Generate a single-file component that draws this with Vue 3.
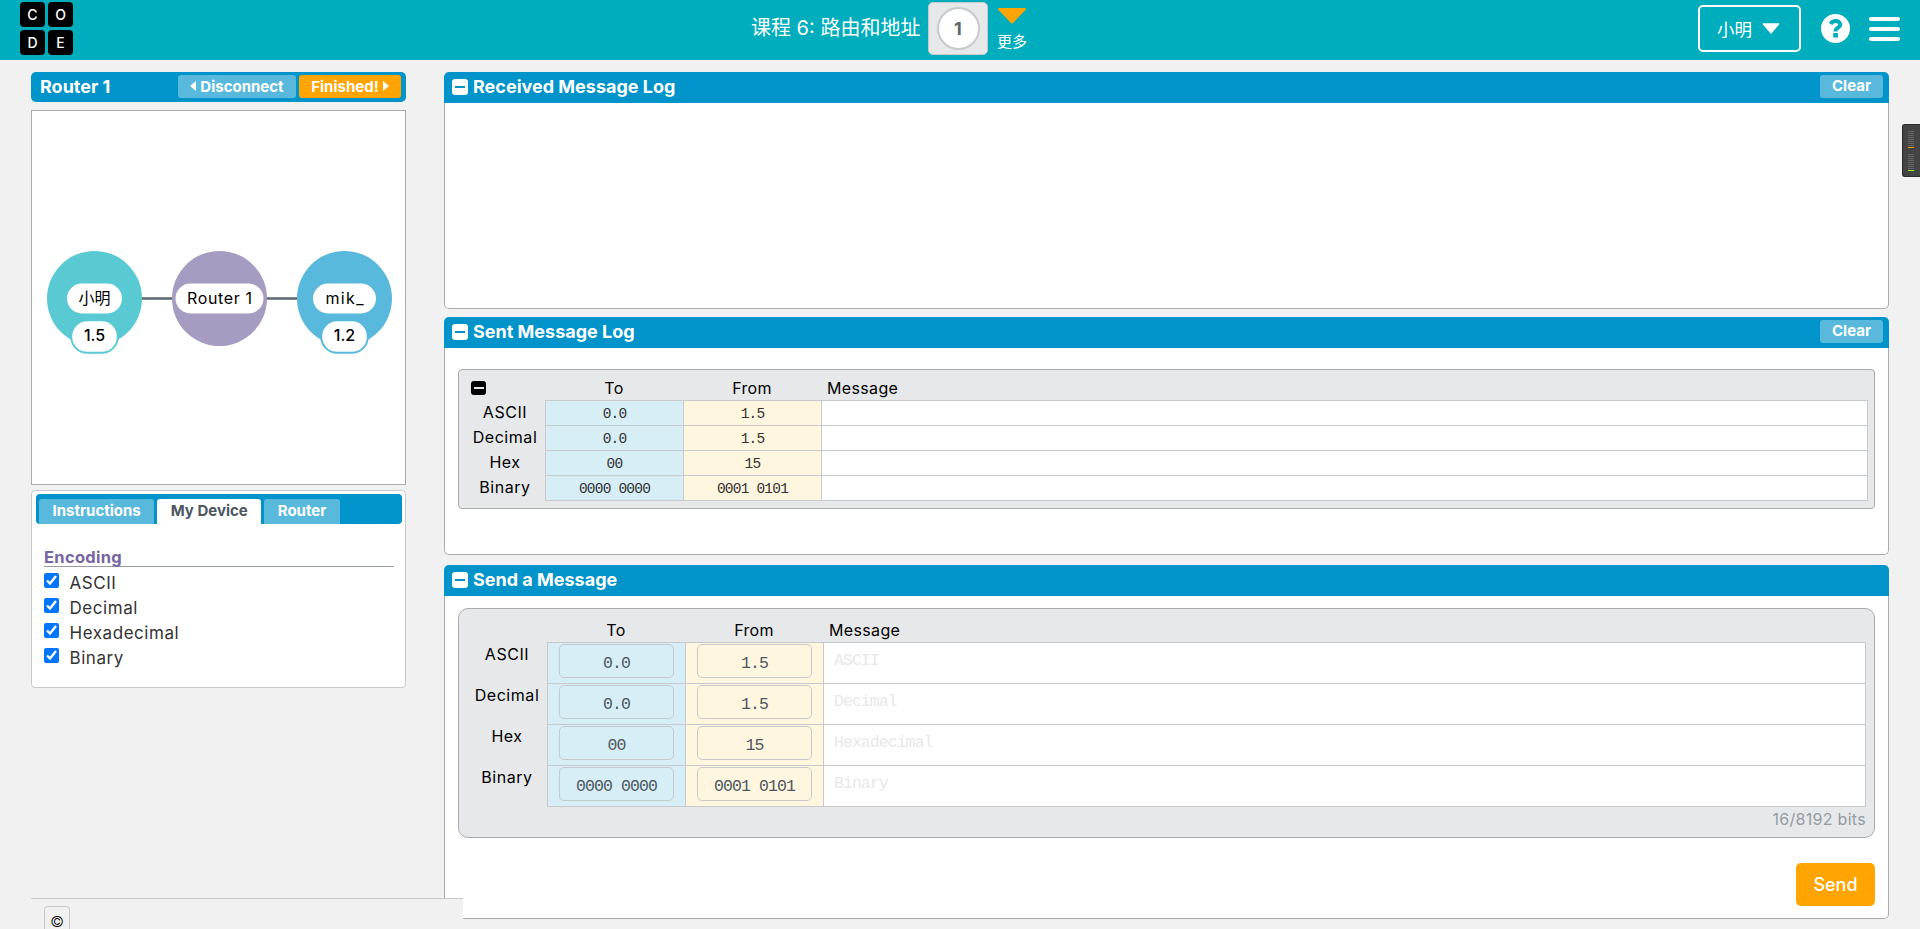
<template>
  <div class="page">
    <header class="top-bar">
      <div class="logo">
        <span v-for="letter in 'CODE'" :key="letter" class="logo-tile">{{ letter }}</span>
      </div>
      <div class="lesson">
        <span class="lesson-title">课程 6: 路由和地址</span>
        <div class="bubble-box"><span class="bubble">1</span></div>
        <div class="more">
          <svg width="30" height="17" viewBox="0 0 30 17">
            <path d="M2 2 H28 L15 15.5 Z" fill="#ffa400" stroke="#ffa400" stroke-width="2" stroke-linejoin="round" />
          </svg>
          <span>更多</span>
        </div>
      </div>
      <div class="user-area">
        <button class="user-btn">
          <span>小明</span>
          <svg width="18" height="11" viewBox="0 0 18 11">
            <path d="M1.5 1 H16.5 L9 9.8 Z" fill="#fff" stroke="#fff" stroke-width="1.6" stroke-linejoin="round" />
          </svg>
        </button>
        <svg class="help" width="29" height="29" viewBox="0 0 29 29">
          <circle cx="14.5" cy="14.5" r="14.5" fill="#fff" />
          <path d="M9.6 10 C10.8 7.8 12.4 7 14.6 7 C17.4 7 19.3 8.4 19.3 10.7 C19.3 13.8 14.4 13.4 14.4 17.4" fill="none" stroke="#00adbc" stroke-width="4" />
          <rect x="12.2" y="19" width="4.8" height="4.6" rx="0.6" fill="#00adbc" />
        </svg>
        <div class="hamburger"><i></i><i></i><i></i></div>
      </div>
    </header>

    <main class="workspace">
      <aside class="left">
        <div class="status-bar">
          <span class="status-title">Router 1</span>
          <button class="small-btn disconnect">
            <svg width="6" height="10" viewBox="0 0 6 10"><path d="M6 0 V10 L0 5 Z" fill="#fff" /></svg>
            <span>Disconnect</span>
          </button>
          <button class="small-btn finished">
            <span>Finished!</span>
            <svg width="6" height="10" viewBox="0 0 6 10"><path d="M0 0 V10 L6 5 Z" fill="#fff" /></svg>
          </button>
        </div>

        <svg class="network" width="373" height="373" viewBox="0 0 373 373">
          <line x1="62" y1="187.5" x2="312" y2="187.5" stroke="#5b6770" stroke-width="2.5" />
          <g v-for="node in nodes" :key="node.name" :transform="`translate(${node.x} 187.5)`">
            <circle r="47.5" :fill="node.color" />
            <rect :x="-node.pill / 2" y="-15" :width="node.pill" height="30" rx="15" fill="#fff" />
            <text class="node-name" y="5.5" :textLength="node.textWidth">{{ node.name }}</text>
            <template v-if="node.address">
              <rect x="-23.3" y="21.8" width="46.6" height="32.5" rx="16" fill="#fff" :stroke="node.color" stroke-width="2" />
              <text class="node-address" y="42.5">{{ node.address }}</text>
            </template>
          </g>
        </svg>

        <div class="tab-panel">
          <div class="tabs">
            <button
              v-for="tab in tabs"
              :key="tab"
              :class="['tab', { active: tab === activeTab }]"
              @click="activeTab = tab"
            >{{ tab }}</button>
          </div>
          <div class="encoding">
            <h4>Encoding</h4>
            <label v-for="item in encodings" :key="item.label" class="check-row">
              <input v-model="item.checked" type="checkbox" />
              <span>{{ item.label }}</span>
            </label>
          </div>
        </div>
      </aside>

      <section class="right">
        <div class="panel received">
          <div class="panel-head">
            <i class="minus"></i>
            <h3>Received Message Log</h3>
            <button class="small-btn clear">Clear</button>
          </div>
          <div class="panel-body"></div>
        </div>

        <div class="panel sent">
          <div class="panel-head">
            <i class="minus"></i>
            <h3>Sent Message Log</h3>
            <button class="small-btn clear">Clear</button>
          </div>
          <div class="panel-body">
            <div class="packet log-packet">
              <div class="grid-row grid-head">
                <span class="corner"><i class="minus dark"></i></span>
                <span>To</span>
                <span>From</span>
                <span class="msg-head">Message</span>
              </div>
              <div v-for="row in rows" :key="row.label" class="grid-row">
                <span class="row-label">{{ row.label }}</span>
                <span class="cell to">{{ row.to }}</span>
                <span class="cell from">{{ row.from }}</span>
                <span class="cell message"></span>
              </div>
            </div>
          </div>
        </div>

        <div class="panel send">
          <div class="panel-head">
            <i class="minus"></i>
            <h3>Send a Message</h3>
          </div>
          <div class="panel-body">
            <div class="packet edit-packet">
              <div class="grid-row grid-head">
                <span></span>
                <span>To</span>
                <span>From</span>
                <span class="msg-head">Message</span>
              </div>
              <div v-for="row in rows" :key="row.label" class="grid-row">
                <span class="row-label">{{ row.label }}</span>
                <span class="cell to"><input v-model="row.to" type="text" /></span>
                <span class="cell from"><input v-model="row.from" type="text" /></span>
                <span class="cell message"><textarea :placeholder="row.placeholder"></textarea></span>
              </div>
              <div class="bits">16/8192 bits</div>
            </div>
            <button class="send-btn">Send</button>
          </div>
        </div>
      </section>
    </main>

    <!-- 底部版权条，浮在内容之上 -->
    <footer class="small-footer"><button class="copyright">©</button></footer>

    <!-- 右侧悬浮电平表 -->
    <div class="meter">
      <div v-for="color in meterColors" :key="color" class="meter-group">
        <i v-for="n in 8" :key="n"></i>
        <i :style="{ background: color }"></i>
      </div>
    </div>
  </div>
</template>

<script setup>
import { ref } from 'vue'

const tabs = ['Instructions', 'My Device', 'Router']
const activeTab = ref('My Device')

// 网络拓扑节点
const nodes = [
  { name: '小明', x: 62.5, color: '#59cad3', pill: 55, textWidth: 32, address: '1.5' },
  { name: 'Router 1', x: 187.5, color: '#a69bc1', pill: 88, textWidth: 65 },
  { name: 'mik_', x: 312.5, color: '#59b9dc', pill: 63, textWidth: 38, address: '1.2' }
]

const encodings = ref([
  { label: 'ASCII', checked: true },
  { label: 'Decimal', checked: true },
  { label: 'Hexadecimal', checked: true },
  { label: 'Binary', checked: true }
])

const rows = ref([
  { label: 'ASCII', to: '0.0', from: '1.5', placeholder: 'ASCII' },
  { label: 'Decimal', to: '0.0', from: '1.5', placeholder: 'Decimal' },
  { label: 'Hex', to: '00', from: '15', placeholder: 'Hexadecimal' },
  { label: 'Binary', to: '0000 0000', from: '0001 0101', placeholder: 'Binary' }
])

const meterColors = ['#ff9d1e', '#86ee10']
</script>

<style>
body {
  margin: 0;
  background: #f1f1f1;
  overflow: hidden;
}
</style>

<style scoped>
* {
  box-sizing: border-box;
}

.page {
  height: 929px;
  overflow: hidden;
  position: relative;
  background: #f1f1f1;
  color: #000;
  font-family: Inter, 'Noto Sans CJK SC', sans-serif;
  font-size: 16px;
}

button {
  font-family: inherit;
  border: none;
  padding: 0;
  cursor: pointer;
}

/* 顶部栏 */
.top-bar {
  display: grid;
  grid-template-columns: 751px 1fr auto;
  height: 60px;
  background: #00adbc;
  color: #fff;
}

.logo {
  display: grid;
  grid-template-columns: 25px 25px;
  grid-auto-rows: 25px;
  gap: 3px;
  padding: 2px 0 0 20px;
}

.logo-tile {
  display: flex;
  align-items: center;
  justify-content: center;
  border-radius: 4px;
  background: #000;
  font-size: 14px;
  font-weight: 500;
}

.lesson {
  display: flex;
  align-items: flex-start;
  white-space: nowrap;
}

.lesson-title {
  width: 177px;
  font-size: 20px;
  line-height: 57px;
}

.bubble-box {
  display: flex;
  align-items: center;
  justify-content: center;
  width: 60px;
  height: 53px;
  margin-top: 2px;
  border: 1px solid #c6cacd;
  border-radius: 5px;
  background: #e7e8ea;
}

.bubble {
  width: 43px;
  height: 43px;
  border: 2px solid #c6cacd;
  border-radius: 50%;
  background: #fff;
  color: #5b6770;
  font-size: 18px;
  font-weight: 700;
  line-height: 39px;
  text-align: center;
}

.more {
  display: flex;
  flex-direction: column;
  align-items: center;
  margin: 7px 0 0 9px;
  font-size: 15px;
  line-height: 35px;
}

.user-area {
  display: flex;
  align-items: flex-start;
  padding-right: 20px;
}

.user-btn {
  display: flex;
  align-items: center;
  gap: 10px;
  width: 103px;
  height: 47px;
  margin-top: 5px;
  padding-left: 17px;
  border: 2px solid #fff;
  border-radius: 5px;
  background: transparent;
  color: #fff;
  font-size: 17.5px;
}

.help {
  margin: 14px 19px 0 20px;
}

.hamburger {
  display: flex;
  flex-direction: column;
  gap: 6px;
  margin-top: 17px;
}

.hamburger i {
  width: 31px;
  height: 4px;
  border-radius: 2px;
  background: #fff;
}

/* 主体布局 */
.workspace {
  display: grid;
  grid-template-columns: 375px 1445px;
  column-gap: 38px;
  padding: 12px 31px 0;
}

.small-btn {
  display: flex;
  align-items: center;
  justify-content: center;
  height: 23px;
  padding-bottom: 1px;
  border-radius: 3px;
  background: #59b9dc;
  color: #fff;
  font-size: 15px;
  font-weight: 700;
}

/* 左侧 */
.status-bar {
  display: flex;
  gap: 3px;
  height: 30px;
  padding: 3px 5px 0 9px;
  border-radius: 5px;
  background: #0094ca;
}

.status-title {
  flex: 1;
  color: #fff;
  font-size: 18px;
  font-weight: 700;
  line-height: 24px;
}

.disconnect {
  width: 118px;
  gap: 4px;
}

.finished {
  width: 102px;
  gap: 4px;
  background: #ffa400;
}

.network {
  display: block;
  box-sizing: content-box;
  margin-top: 8px;
  border: 1px solid #a9acaf;
  background: #fff;
}

.node-name,
.node-address {
  font-size: 16px;
  text-anchor: middle;
}

.node-address {
  font-weight: 500;
}

.tab-panel {
  height: 198px;
  margin-top: 5px;
  padding: 3px 3px 3px 4px;
  border: 1px solid #c6cacd;
  border-radius: 4px;
  background: #fff;
}

.tabs {
  display: flex;
  gap: 3px;
  height: 30px;
  padding: 5px 3px 0;
  border-radius: 4px;
  background: #0094ca;
}

.tab {
  padding: 0 13.5px 2px;
  border-radius: 3px 3px 0 0;
  background: #59b9dc;
  color: #fff;
  font-size: 15px;
  font-weight: 700;
}

.tab.active {
  background: #fff;
  color: #4d575f;
}

.encoding {
  padding: 24px 8px 0 8px;
}

.encoding h4 {
  height: 19px;
  margin: 0 0 4px;
  border-bottom: 1px solid #949ca2;
  color: #7665a0;
  font-size: 16.5px;
  letter-spacing: 0.3px;
  line-height: 19px;
}

.check-row {
  display: flex;
  gap: 10.5px;
  height: 25px;
  color: #333;
  font-size: 17px;
  letter-spacing: 0.55px;
  line-height: 25px;
}

.check-row input {
  width: 15px;
  height: 15px;
  margin: 2px 0 0;
}

/* 右侧面板 */
.panel {
  display: flex;
  flex-direction: column;
  border-radius: 5px;
  background: #fff;
}

.received {
  height: 237px;
}

.sent {
  height: 238px;
  margin-top: 8px;
}

.send {
  height: 354px;
  margin-top: 10px;
}

.panel-head {
  display: flex;
  align-items: center;
  height: 31px;
  padding: 0 6px 1px 8px;
  border-radius: 5px 5px 0 0;
  background: #0094ca;
  color: #fff;
}

.panel-head h3 {
  flex: 1;
  margin: 0 0 0 5px;
  font-size: 18px;
  line-height: 30px;
}

.clear {
  width: 63px;
  margin-bottom: 2px;
}

.panel-body {
  flex: 1;
  border: 1px solid #a9acaf;
  border-top: none;
  border-radius: 0 0 5px 5px;
}

.minus {
  display: flex;
  align-items: center;
  justify-content: center;
  width: 16px;
  height: 16px;
  border-radius: 3px;
  background: #fff;
}

.minus::after {
  content: '';
  width: 10px;
  height: 2px;
  background: #0094ca;
}

.minus.dark {
  width: 15px;
  height: 14px;
  background: #000;
}

.minus.dark::after {
  background: #e7e8ea;
}

/* 数据包表格 */
.packet {
  margin: 21px 13px 0;
  border: 1px solid #a9acaf;
  background: #e7e8ea;
}

.grid-row {
  display: grid;
  grid-template-columns: 80px 138px 138px 1fr;
}

.grid-head {
  letter-spacing: 0.35px;
  text-align: center;
}

.grid-head .msg-head {
  padding-left: 6px;
  text-align: left;
}

.row-label {
  letter-spacing: 0.55px;
  text-align: center;
}

.cell {
  border: 1px solid #c6cacd;
  border-width: 0 0 1px 1px;
  font-family: 'Liberation Mono', monospace;
  text-align: center;
}

.to {
  background: #d7eef6;
}

.from {
  background: #fff6df;
}

.message {
  border-right-width: 1px;
  background: #fff;
}

.grid-head + .grid-row .cell {
  border-top-width: 1px;
}

.log-packet {
  height: 140px;
  padding: 6px 6px 0;
  border-radius: 4px;
}

.log-packet .grid-head {
  height: 24px;
  line-height: 25px;
}

.corner {
  padding: 5px 0 0 6px;
}

.log-packet .cell {
  height: 25px;
  color: #333;
  font-size: 14.5px;
  letter-spacing: -0.8px;
  line-height: 26px;
}

.log-packet .grid-head + .grid-row .cell {
  height: 26px;
}

.log-packet .row-label {
  height: 24px;
  line-height: 22px;
}

.log-packet .grid-head + .grid-row .row-label {
  line-height: 24px;
}

.edit-packet {
  height: 230px;
  margin-top: 12px;
  padding: 9px 8px 0;
  border-radius: 10px;
}

.edit-packet .grid-head {
  height: 24px;
  line-height: 24px;
}

.edit-packet .row-label {
  height: 24px;
  line-height: 22px;
}

.edit-packet .grid-head + .grid-row .row-label {
  line-height: 24px;
}

.edit-packet .cell {
  height: 41px;
  padding: 1px 0 0 11px;
  text-align: left;
}

.edit-packet .grid-head + .grid-row .cell {
  height: 42px;
}

.cell input {
  display: block;
  width: 115px;
  height: 34px;
  padding: 4px 0 0;
  border: 1px solid #c6cacd;
  border-radius: 5px;
  background: transparent;
  color: #4d575f;
  font: 16.5px 'Liberation Mono', monospace;
  letter-spacing: -0.9px;
  text-align: center;
}

.edit-packet .message {
  padding: 0 10px;
}

.cell textarea {
  display: block;
  width: 100%;
  height: 36px;
  padding: 8px 0 0;
  border: none;
  resize: none;
  background: transparent;
  font: 16.5px/20px 'Liberation Mono', monospace;
  letter-spacing: -0.95px;
}

.cell textarea::placeholder {
  color: #e7e8ea;
}

.bits {
  color: #949ca2;
  letter-spacing: 0.3px;
  line-height: 24px;
  text-align: right;
}

.send-btn {
  display: block;
  width: 79px;
  height: 43px;
  margin: 25px 13px 0 auto;
  border-radius: 5px;
  background: #ffa400;
  color: #fff;
  font-size: 18px;
  font-weight: 500;
}

/* 浮层 */
.small-footer {
  position: absolute;
  left: 31px;
  bottom: 0;
  width: 432px;
  height: 31px;
  padding: 7px 13px 0;
  border-top: 1px solid #c6cacd;
  background: #f1f1f1;
}

.copyright {
  display: block;
  width: 26px;
  height: 23px;
  padding-top: 6px;
  border: 1px solid #c6cacd;
  border-bottom: none;
  border-radius: 4px 4px 0 0;
  background: transparent;
  color: #000;
  font-size: 15px;
  font-weight: 300;
  line-height: 15px;
}

.meter {
  position: absolute;
  top: 124px;
  right: 0;
  display: flex;
  flex-direction: column;
  gap: 6px;
  width: 18px;
  height: 53px;
  padding: 6px 5px;
  border: 1px solid #2b2b2b;
  border-right: none;
  border-radius: 3px 0 0 3px;
  background: #444;
}

.meter-group {
  display: flex;
  flex-direction: column;
  gap: 1px;
}

.meter-group i {
  width: 6px;
  height: 1px;
  background: #666;
}
</style>
